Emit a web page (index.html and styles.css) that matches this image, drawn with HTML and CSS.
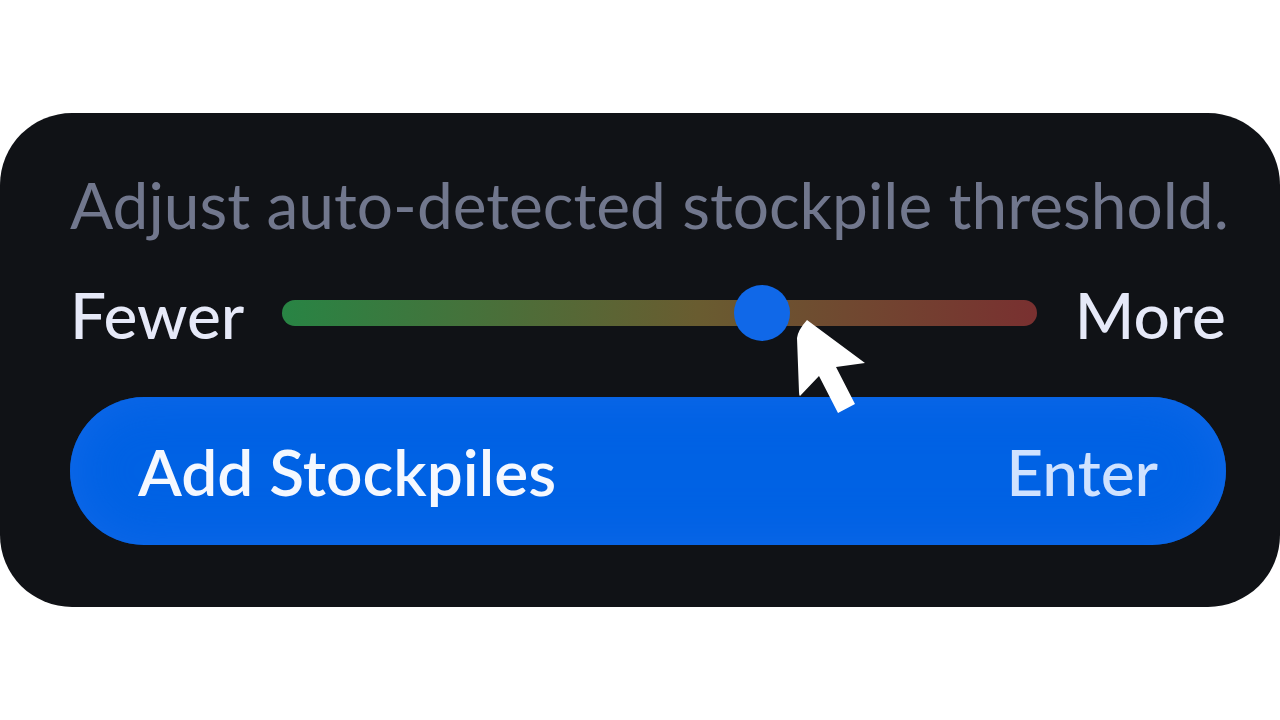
FILE: index.html
```html
<!DOCTYPE html>
<html lang="en">
<head>
    <meta charset="UTF-8">
    <meta name="viewport" content="width=device-width, initial-scale=1.0">
    <title>Stockpile Threshold</title>
    <link rel="stylesheet" href="styles.css">
</head>
<body>
    <form class="panel">
        <p class="hint" id="hint">Adjust auto-detected stockpile threshold.</p>
        <div class="slider-row">
            <label for="threshold">Fewer</label>
            <div class="slider">
                <input type="range" id="threshold" min="0" max="1000" value="647" aria-describedby="hint">
                <svg class="cursor" viewBox="0 0 70 96" aria-hidden="true">
                    <path d="M10 2 L68 45 L39 49 L58 86 L41 95 L22 58 L3 78 Q2 77 2 74 L0 20 Q1 12 10 2 Z" fill="#fff"/>
                </svg>
            </div>
            <label for="threshold">More</label>
        </div>
        <button type="button" class="add-button">
            <span>Add Stockpiles</span>
            <span class="shortcut">Enter</span>
        </button>
    </form>
</body>
</html>
```
FILE: styles.css
```css
* {
    box-sizing: border-box;
}

body {
    margin: 0;
    min-height: 100vh;
    display: flex;
    align-items: center;
    background-color: #fff;
    font-family: Lato, sans-serif;
}

.panel {
    width: 100%;
    padding: 52px 54px 62px 70px;
    border-radius: 72px;
    background-color: #101216;
    color: #e6e9f8;
    font-size: 64px;
    line-height: 80px;
}

.hint {
    margin: 0;
    color: #71778d;
    white-space: nowrap;
}

.slider-row {
    display: flex;
    align-items: center;
    gap: 38px;
    margin: 30px 0 42px;
    font-weight: 500;
}

.slider {
    position: relative;
    flex: 1;
    display: flex;
    margin-bottom: 4px;
}

#threshold {
    appearance: none;
    width: 100%;
    height: 26px;
    margin: 0;
    border-radius: 13px;
    background: linear-gradient(to right, #288444, #695c30 55%, #793030);
}

#threshold::-webkit-slider-thumb {
    appearance: none;
    width: 56px;
    height: 56px;
    border-radius: 50%;
    background-color: #1068e8;
}

.cursor {
    position: absolute;
    left: 515px;
    top: 18px;
    width: 70px;
    height: 96px;
}

.add-button {
    display: flex;
    justify-content: space-between;
    align-items: center;
    width: 100%;
    height: 148px;
    padding: 0 68px;
    border: none;
    border-radius: 74px;
    background-color: #0062e4;
    box-shadow: inset 0 0 48px #1068e8;
    color: #f4f8ff;
    font: 600 64px Lato, sans-serif;
    cursor: pointer;
}

.shortcut {
    color: #cfe2ff;
    font-weight: 500;
}
```
